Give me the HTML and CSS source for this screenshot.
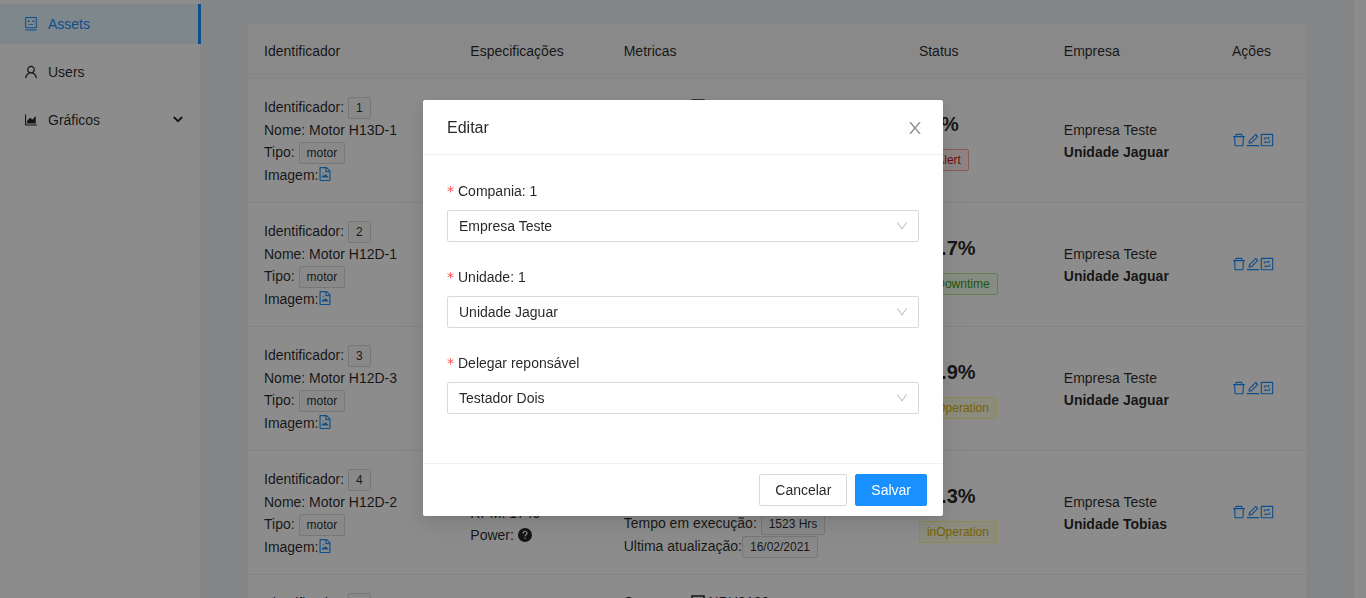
FILE: index.html
```
<!DOCTYPE html>
<html lang="pt-BR">
<head>
<meta charset="utf-8">
<meta name="viewport" content="width=device-width, initial-scale=1">
<title>Assets</title>
<link rel="stylesheet" href="styles.css">
</head>
<body>
<svg class="sprite" aria-hidden="true">
  <symbol id="i-robot" viewBox="64 64 896 896"><path d="M300 328a60 60 0 10120 0 60 60 0 10-120 0zM852 64H172c-17.700 0-32 14.300-32 32v660c0 17.700 14.300 32 32 32h680c17.700 0 32-14.300 32-32V96c0-17.700-14.300-32-32-32zm-32 660H204V128h616v596zM604 328a60 60 0 10120 0 60 60 0 10-120 0zM852 860H172c-17.700 0-32 14.300-32 32v36h744v-36c0-17.700-14.300-32-32-32zM372 506h280v60H372z"/></symbol>
  <symbol id="i-user" viewBox="64 64 896 896"><path d="M858.500 763.600a374 374 0 00-80.600-119.500 375.630 375.630 0 00-119.500-80.600c-.4-.2-.8-.3-1.200-.5C719.500 518 760 444.700 760 362c0-137-111-248-248-248S264 225 264 362c0 82.700 40.500 156 102.800 201.100-.4.2-.8.3-1.200.5-44.800 18.900-85 46-119.500 80.600a375.630 375.630 0 00-80.600 119.500A371.700 371.700 0 00136 901.800a8 8 0 008 8.200h60c4.400 0 7.900-3.500 8-7.800 2-77.200 33-149.500 87.800-204.300 56.700-56.700 132-87.900 212.200-87.900s155.500 31.200 212.200 87.900C779 752.700 810 825 812 902.200c.1 4.400 3.600 7.800 8 7.800h60a8 8 0 008-8.200c-1-47.800-10.900-94.300-29.500-138.200zM512 534c-45.900 0-89.100-17.900-121.600-50.400S340 407.900 340 362c0-45.900 17.900-89.100 50.400-121.600S466.100 190 512 190s89.100 17.900 121.600 50.400S684 316.100 684 362c0 45.900-17.900 89.100-50.400 121.600S557.900 534 512 534z"/></symbol>
  <symbol id="i-area" viewBox="64 64 896 896"><path d="M888 792H200V168c0-4.400-3.600-8-8-8h-56c-4.400 0-8 3.600-8 8v688c0 4.400 3.600 8 8 8h752c4.400 0 8-3.600 8-8v-56c0-4.400-3.600-8-8-8zm-616-64h536c4.400 0 8-3.600 8-8V284c0-7.200-8.700-10.700-13.700-5.700L592 488.600l-125.400-124a8.030 8.030 0 00-11.300 0l-189 189.600a7.870 7.870 0 00-2.300 5.600V720c0 4.400 3.600 8 8 8z"/></symbol>
  <symbol id="i-delete" viewBox="64 64 896 896"><path d="M360 184h304v72h72v-80c0-35.300-28.700-64-64-64H352c-35.300 0-64 28.700-64 64v80h72v-72zm504 72H160c-17.700 0-32 14.300-32 32v32c0 4.400 3.600 8 8 8h60.400l24.700 523c1.600 34.100 29.800 61 63.900 61h454c34.200 0 62.300-26.800 63.900-61l24.700-523H888c4.400 0 8-3.600 8-8v-32c0-17.700-14.300-32-32-32zM731.300 840H292.700l-24.200-512h487l-24.200 512z"/></symbol>
  <symbol id="i-edit" viewBox="64 64 896 896"><path d="M257.700 752c2 0 4-.2 6-.5L431.900 722c2-.4 3.900-1.300 5.300-2.800l423.900-423.900a9.960 9.960 0 000-14.100L694.900 114.900c-1.900-1.900-4.400-2.900-7.100-2.900s-5.200 1-7.100 2.900L256.800 538.800c-1.500 1.500-2.400 3.300-2.800 5.300l-29.500 168.200a33.500 33.500 0 009.400 29.800c6.600 6.400 14.900 9.900 23.800 9.900zm67.400-174.400L687.800 215l73.300 73.300-362.700 362.600-88.900 15.700 15.600-89zM880 836H144c-17.700 0-32 14.300-32 32v36c0 4.400 3.600 8 8 8h784c4.400 0 8-3.600 8-8v-36c0-17.700-14.300-32-32-32z"/></symbol>
  <symbol id="i-interaction" viewBox="64 64 896 896"><path d="M880 112H144c-17.700 0-32 14.300-32 32v736c0 17.700 14.300 32 32 32h736c17.700 0 32-14.300 32-32V144c0-17.700-14.300-32-32-32zm-40 728H184V184h656v656z"/><path d="M304 490v-66c0-44 36-80 80-80h210v-60l104 92-104 92v-60H384c-10 0-16 6-16 16v66zM720 534v66c0 44-36 80-80 80H430v60l-104-92 104-92v60h210c10 0 16-6 16-16v-66z"/></symbol>
  <symbol id="i-image" viewBox="64 64 896 896"><path d="M854.600 288.600L639.400 73.400c-6-6-14.100-9.400-22.600-9.400H192c-17.700 0-32 14.300-32 32v832c0 17.700 14.300 32 32 32h640c17.700 0 32-14.300 32-32V311.300c0-8.500-3.400-16.700-9.400-22.700zM790.200 326H602V137.800L790.200 326zm1.800 562H232V136h302v216c0 23.200 18.800 42 42 42h216v494z"/><path d="M553 509l-99 127-45-57c-3-4-9-4-12 0l-111 141c-4 5 0 13 6 13h440c7 0 11-8 6-13L566 509c-3-4-10-4-13 0zM360 442a40 40 0 1080 0 40 40 0 10-80 0z"/></symbol>
  <symbol id="i-down" viewBox="64 64 896 896"><path d="M884 256h-75c-5.100 0-9.900 2.500-12.900 6.600L512 654.200 227.900 262.600c-3-4.100-7.800-6.600-12.900-6.600h-75c-6.500 0-10.300 7.400-6.500 12.700l352.600 486.100c12.800 17.600 39 17.600 51.700 0l352.600-486.100c3.900-5.300.1-12.700-6.400-12.700z"/></symbol>
  <symbol id="i-close" viewBox="64 64 896 896"><path d="M563.800 512l262.500-312.900c4.400-5.200.7-13.100-6.100-13.100h-79.800c-4.700 0-9.200 2.100-12.300 5.700L511.600 449.800 295.100 191.700c-3-3.600-7.500-5.700-12.300-5.700H203c-6.800 0-10.500 7.900-6.100 13.100L459.400 512 196.900 824.900A7.950 7.950 0 00203 838h79.800c4.700 0 9.200-2.100 12.300-5.700l216.500-258.100 216.500 258.100c3 3.600 7.500 5.700 12.300 5.700h79.800c6.800 0 10.500-7.900 6.100-13.100L563.800 512z"/></symbol>
  <symbol id="i-question" viewBox="0 0 14 14"><circle cx="7" cy="7" r="7"/><path d="M5 5.500C5 4.200 5.900 3.500 7 3.500s2 .7 2 1.800c0 1.400-2 1.400-2 3M7 9.500v1.200" fill="none" stroke="#fff" stroke-width="1.200"/></symbol>
  <symbol id="i-box" viewBox="0 0 14 14"><path d="M1 1h12v12H1z" fill="none" stroke="currentColor" stroke-width="1.500"/></symbol>
</svg>

<div class="layout">
  <nav class="sider">
    <a class="item active" href="#assets"><svg class="icon"><use href="#i-robot"/></svg><span>Assets</span></a>
    <a class="item" href="#users"><svg class="icon"><use href="#i-user"/></svg><span>Users</span></a>
    <a class="item" href="#graficos"><svg class="icon"><use href="#i-area"/></svg><span>Gráficos</span>
      <svg class="chevron" viewBox="0 0 10 10"><path d="M1.500 2.500L5 6 8.500 2.500"/></svg></a>
  </nav>
  <main class="content">
    <table class="assets">
      <colgroup><col class="c-id"><col class="c-spec"><col class="c-metric"><col class="c-status"><col class="c-company"><col class="c-action"></colgroup>
      <thead><tr><th>Identificador</th><th>Especificações</th><th>Metricas</th><th>Status</th><th>Empresa</th><th>Ações</th></tr></thead>
      <tbody id="rows"></tbody>
    </table>
  </main>
</div>

<div class="mask">
  <form class="modal" role="dialog" aria-labelledby="modal-title">
    <header class="modal-head">
      <h1 id="modal-title">Editar</h1>
      <button class="close" type="button" aria-label="Fechar"><svg class="icon"><use href="#i-close"/></svg></button>
    </header>
    <div class="modal-body">
      <div class="field"><label for="company">Compania: 1</label>
        <div class="select"><select id="company"><option>Empresa Teste</option></select><svg class="arrow"><use href="#i-down"/></svg></div></div>
      <div class="field"><label for="unit">Unidade: 1</label>
        <div class="select"><select id="unit"><option>Unidade Jaguar</option></select><svg class="arrow"><use href="#i-down"/></svg></div></div>
      <div class="field"><label for="owner">Delegar reponsável</label>
        <div class="select"><select id="owner"><option>Testador Dois</option></select><svg class="arrow"><use href="#i-down"/></svg></div></div>
    </div>
    <footer class="modal-foot">
      <button class="btn" type="button">Cancelar</button>
      <button class="btn primary" type="button">Salvar</button>
    </footer>
  </form>
</div>
<script src="script.js"></script>
</body>
</html>
```
FILE: styles.css
```
* { box-sizing: border-box; }
body {
  margin: 0;
  height: 100vh;
  overflow: hidden;
  background: #fff;
  color: rgba(0, 0, 0, 0.85);
  font: 14px/22px "Liberation Sans", Arial, sans-serif;
}
.sprite { position: absolute; width: 0; height: 0; }
.icon { width: 1em; height: 1em; fill: currentColor; }

.layout { display: flex; height: 100vh; overflow: hidden; padding-right: 12px; }
.sider { z-index: 1; flex: 0 0 200px; padding-top: 4px; background: #fff; }
.item {
  display: flex;
  align-items: center;
  gap: 10px;
  height: 40px;
  margin-bottom: 8px;
  padding: 0 16px 0 24px;
  color: inherit;
  text-decoration: none;
}
.item.active {
  margin-right: -1px;
  border-right: 3px solid #1890ff;
  background: #e6f7ff;
  color: #1890ff;
}
.chevron {
  width: 12px;
  height: 12px;
  margin-left: auto;
  fill: none;
  stroke: currentColor;
  stroke-width: 1.5;
}

.content { flex: 1; min-width: 0; padding: 24px 48px; background: #f0f2f5; }
.assets {
  width: 100%;
  table-layout: fixed;
  border-collapse: separate;
  border-spacing: 0;
  background: #fff;
}
.c-id { width: 19.500%; }
.c-spec { width: 14.500%; }
.c-metric { width: 27.900%; }
.c-status { width: 13.700%; }
.c-company { width: 15.900%; }
.assets th, .assets td { padding: 16px; border-bottom: 1px solid #f0f0f0; text-align: left; white-space: nowrap; }
.assets th { background: #fafafa; font-weight: 400; }
.assets td { height: 124px; vertical-align: middle; }
.line .icon { vertical-align: -2px; }
.line a { color: #1890ff; }
.line a .icon { vertical-align: -1px; }
.sensors { padding-bottom: 1px; }
.tag {
  display: inline-block;
  padding: 0 7px;
  border: 1px solid #d9d9d9;
  border-radius: 2px;
  background: #fafafa;
  font-size: 12px;
  line-height: 20px;
}
.tag.red { border-color: #ffa39e; background: #fff1f0; color: #cf1322; }
.tag.green { border-color: #b7eb8f; background: #f6ffed; color: #389e0d; }
.tag.yellow { border-color: #fffb8f; background: #feffe6; color: #d4b106; }
.percent { margin: 0 0 10px; font-size: 20px; line-height: 28px; font-weight: 700; }
.actions { display: flex; padding-bottom: 2px; }
.actions button { display: flex; padding: 0; border: 0; background: none; color: #1890ff; font-size: 14px; }

.mask {
  position: fixed;
  inset: 0;
  z-index: 2;
  display: flex;
  justify-content: center;
  align-items: flex-start;
  padding-top: 100px;
  background: rgba(0, 0, 0, 0.45);
}
.modal {
  width: 520px;
  border-radius: 2px;
  background: #fff;
  box-shadow: 0 3px 6px -4px rgba(0, 0, 0, 0.12), 0 6px 16px 0 rgba(0, 0, 0, 0.08), 0 9px 28px 8px rgba(0, 0, 0, 0.05);
}
.modal-head {
  display: flex;
  justify-content: space-between;
  align-items: center;
  padding: 17px 20px 15px 24px;
  border-bottom: 1px solid #f0f0f0;
}
.modal-head h1 { margin: 0; font-size: 16px; line-height: 22px; font-weight: 400; }
.close { display: flex; padding: 0; border: 0; background: none; color: rgba(0, 0, 0, 0.45); font-size: 16px; }
.modal-body { padding: 25px 24px; }
.field { margin-bottom: 24px; }
.field label { display: block; margin-bottom: 8px; }
.field label::before {
  content: "*";
  margin-right: 4px;
  color: #ff4d4f;
  font: 14px/1 "DejaVu Sans", sans-serif;
}
.select { display: grid; align-items: center; }
.select > * { grid-area: 1 / 1; }
.select select {
  width: 100%;
  height: 32px;
  padding: 0 11px;
  appearance: none;
  border: 1px solid #d9d9d9;
  border-radius: 2px;
  background: #fff;
  color: inherit;
  font: inherit;
}
.arrow { justify-self: end; width: 12px; height: 12px; margin-right: 11px; fill: rgba(0, 0, 0, 0.25); pointer-events: none; }
.modal-foot { display: flex; justify-content: flex-end; gap: 8px; padding: 10px 16px; border-top: 1px solid #f0f0f0; }
.btn {
  height: 32px;
  padding: 0 15px;
  border: 1px solid #d9d9d9;
  border-radius: 2px;
  background: #fff;
  color: inherit;
  font: inherit;
}
.btn.primary { border-color: #1890ff; background: #1890ff; color: #fff; }
```
FILE: script.js
```
const assets = [
  { id: 1, name: "Motor H13D-1", percent: "75%", status: "inAlert", tone: "red", unit: "Unidade Jaguar" },
  { id: 2, name: "Motor H12D-1", percent: "92.7%", status: "inDowntime", tone: "green", unit: "Unidade Jaguar" },
  { id: 3, name: "Motor H12D-3", percent: "88.9%", status: "inOperation", tone: "yellow", unit: "Unidade Jaguar" },
  { id: 4, name: "Motor H12D-2", percent: "84.3%", status: "inOperation", tone: "yellow", unit: "Unidade Tobias" },
  { id: 5, name: "Motor H12D-4", percent: "90.1%", status: "inOperation", tone: "yellow", unit: "Unidade Tobias" }
];
const icon = (name) => `<svg class="icon"><use href="#i-${name}"/></svg>`;

document.getElementById("rows").innerHTML = assets.map((a) => `
<tr>
  <td>
    <div class="line">Identificador: <span class="tag">${a.id}</span></div>
    <div class="line">Nome: ${a.name}</div>
    <div class="line">Tipo: <span class="tag">motor</span></div>
    <div class="line">Imagem:<a href="#imagem" aria-label="Imagem">${icon("image")}</a></div>
  </td>
  <td>
    <div class="line">Modelo: W22</div>
    <div class="line">RPM: 1740</div>
    <div class="line">Power: ${icon("question")}</div>
  </td>
  <td>
    <div class="line sensors">Sensores: ${icon("box")} NPH8100</div>
    <div class="line">Temperatura: 80</div>
    <div class="line">Tempo em execução: <span class="tag">1523 Hrs</span></div>
    <div class="line">Ultima atualização:<span class="tag">16/02/2021</span></div>
  </td>
  <td><p class="percent">${a.percent}</p><span class="tag ${a.tone}">${a.status}</span></td>
  <td>Empresa Teste<br><b>${a.unit}</b></td>
  <td><div class="actions">
    <button type="button" aria-label="Excluir">${icon("delete")}</button>
    <button type="button" aria-label="Editar">${icon("edit")}</button>
    <button type="button" aria-label="Atualizar">${icon("interaction")}</button>
  </div></td>
</tr>`).join("");
```
